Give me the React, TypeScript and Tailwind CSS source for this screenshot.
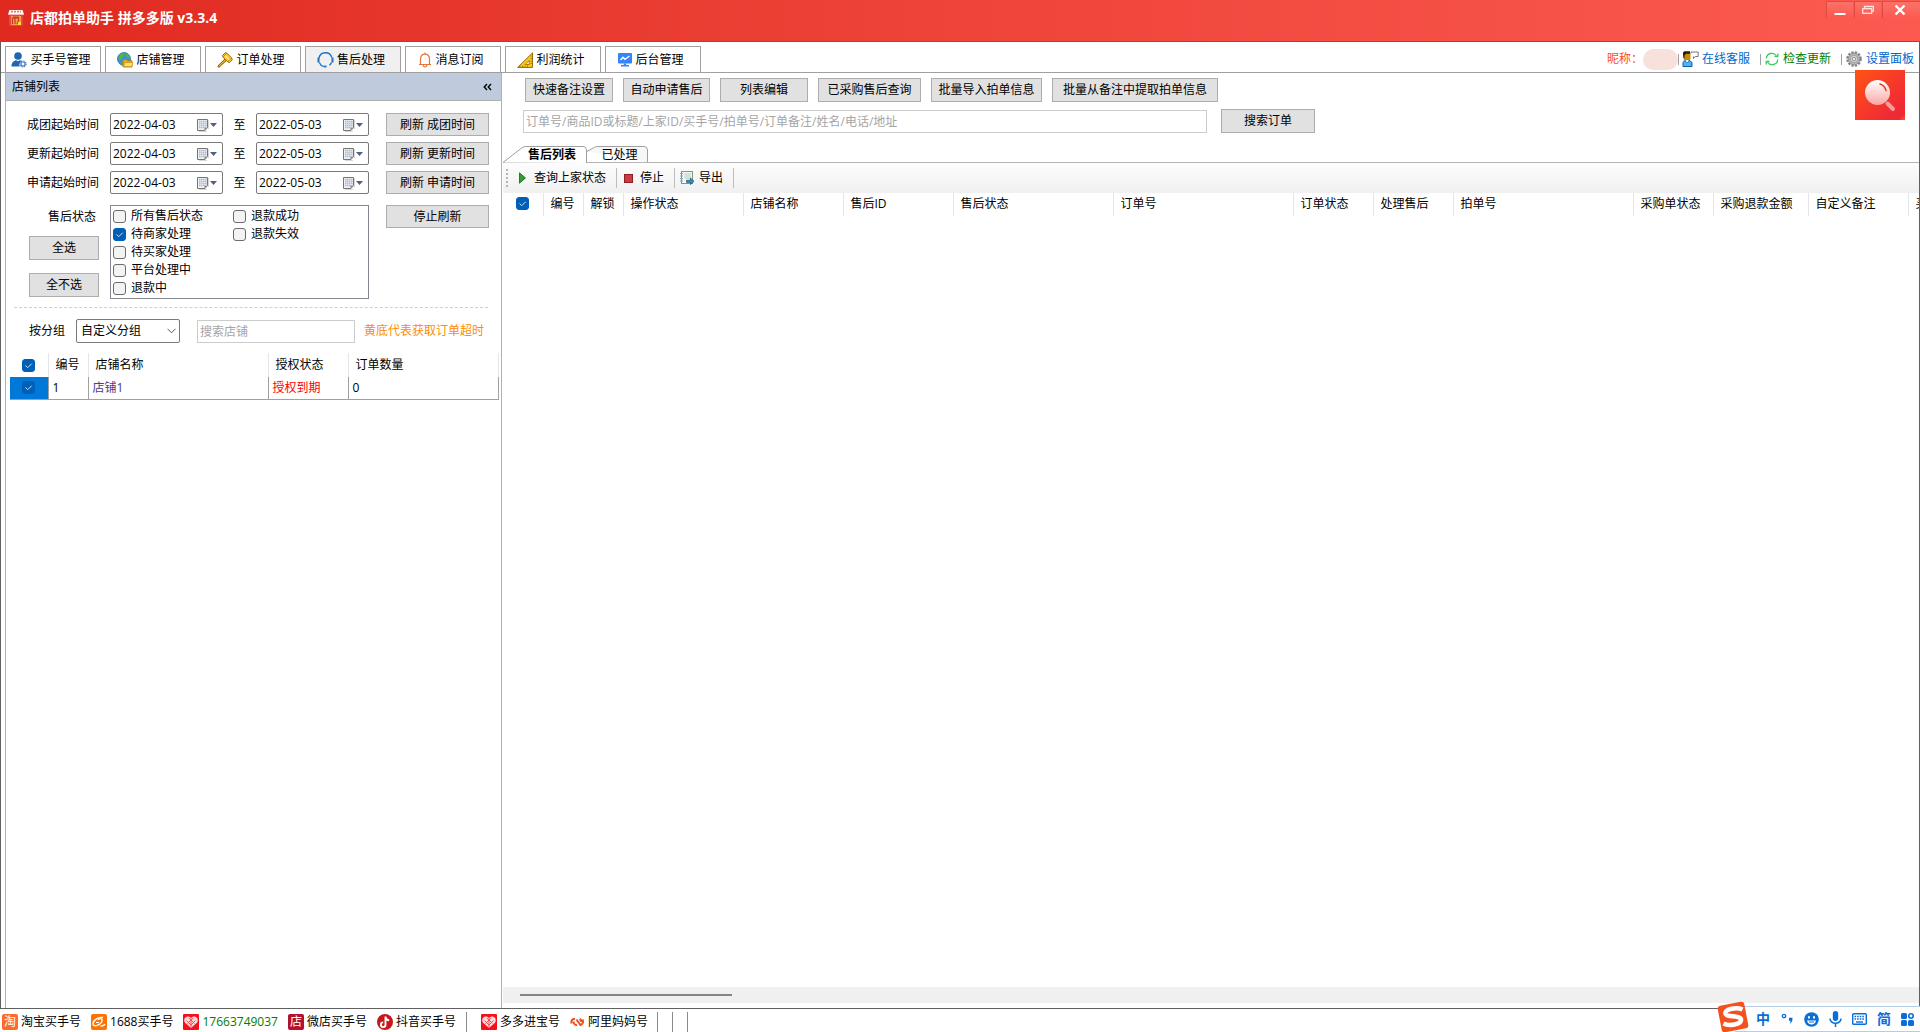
import { useState } from "react";
import type { ReactNode } from "react";
import clsx from "clsx";

const FONT = "font-['Open_Sans','Noto_Sans_CJK_SC',sans-serif]";

/* ---------- icons ---------- */

function ShopLogo() {
  return (
    <svg width="16" height="16" viewBox="0 0 16 16">
      <rect x="1" y="3" width="14" height="13" rx="1" fill="#e8453c" />
      <path d="M1.5 0h13L16 4.5H0z" fill="#fff" />
      <path d="M3 1.6h10" stroke="#e8766f" strokeWidth="1.6" strokeDasharray="2 1" />
      <path d="M0 4.5h16" stroke="#f3b6b2" />
      <rect x="3" y="6" width="10" height="9" fill="#f9a03f" />
      <path d="M4.5 14V8h2.5v6M7 8h3.5v3l-1.5 3M5 7h6" fill="none" stroke="#c8362c" strokeWidth="1.2" />
      <path d="M10 12h3v3h-3z" fill="#ffd94a" />
    </svg>
  );
}

function BuyerIcon() {
  return (
    <svg width="16" height="16" viewBox="0 0 16 16">
      <circle cx="7" cy="4" r="3.8" fill="#1f66b1" />
      <path d="M.5 14.500C.5 10.500 2.500 8.800 5 8.200l2 1 2-1c1 .2 2 .6 2.600 1.300-2.600.2-4 2.800-2.800 5z" fill="#1f66b1" />
      <circle cx="12" cy="12" r="3" fill="#fff" stroke="#4a86c4" strokeWidth="1.200" strokeDasharray="1.500 .85" />
      <circle cx="12" cy="12" r="2" fill="#fff" stroke="#4a86c4" strokeWidth="1.200" />
    </svg>
  );
}

function GlobeIcon() {
  return (
    <svg width="16" height="16" viewBox="0 0 16 16">
      <circle cx="7" cy="7" r="6.500" fill="#3f8fdc" stroke="#2a6fae" strokeWidth=".8" />
      <path d="M2 4c1-2 3-3 5-3l1 2-2 1-1 3-2 1-1.500-1zM9 1.500c2 .5 3.500 2 4 4L11 6 9 4zM4 9l3 1v3l-2-.5z" fill="#4fbb3b" />
      <path d="M6 7.500h3.500l1 1.200H15V15H6z" fill="#e9a91c" stroke="#b27a0a" strokeWidth=".8" />
      <path d="M6.500 14.500 8 10.500h8l-1.200 4z" fill="#ffe16a" stroke="#c78f12" strokeWidth=".7" />
    </svg>
  );
}

function GavelIcon() {
  return (
    <svg width="16" height="16" viewBox="0 0 16 16">
      <path d="M8.500 6.500.8 14l1 1.400L10 8" fill="#f0b41c" stroke="#7a4a06" strokeWidth=".9" />
      <path d="M5.500 3.500 8.500.6l1.500.6 4.500 4.600.8 2-2.800 2.800-2-.8-4.400-4.500z" fill="#ffc926" stroke="#8a5708" strokeWidth=".9" />
      <path d="m7.500 3 5.400 5.400" stroke="#fff0a0" strokeWidth="1.200" />
      <path d="m9.500 1.600-3 3M13.800 6.600l-3 3" stroke="#a06c0c" strokeWidth=".8" />
    </svg>
  );
}

function HeadsetIcon() {
  return (
    <svg width="17" height="16" viewBox="0 0 17 16" fill="none" stroke="#1d6fc4">
      <path d="M2 6A6.600 6.600 0 0 1 14.800 5.500" strokeWidth="1.300" />
      <path d="M1.500 5.500v5M15.500 5.500v5" strokeWidth="2" />
      <path d="M2.300 10.500c.8 2 2.200 3.400 4.200 4M14.500 10.500c-.5 1.300-1.100 2-2 2.700" strokeWidth="1.300" />
      <path d="M6.500 14.500h3" strokeWidth="1.800" />
    </svg>
  );
}

function BellIcon() {
  return (
    <svg width="14" height="16" viewBox="0 0 14 16" fill="none" stroke="#e8743a" strokeWidth="1.200">
      <path d="M7 .5v1.500M1 12.500h12M2.500 12.500V7.500C2.500 4.500 4.200 2.200 7 2.200s4.500 2.300 4.500 5.300v5M5.200 13c.2 1.500.8 2 1.800 2s1.600-.5 1.800-2" />
    </svg>
  );
}

function RulerIcon() {
  return (
    <svg width="16" height="16" viewBox="0 0 16 16">
      <path d="M15.500.8v14.700H.6z" fill="#f8c51c" stroke="#8a6408" strokeWidth=".9" />
      <path d="M12.200 8.500v4H8.300z" fill="#fff" stroke="#9a720c" strokeWidth=".9" />
      <path d="M3 15v-1.500M5.500 15v-1.500M8 15v-1.500M10.500 15v-1.500M15 4h-1.500M15 6.500h-1.500M15 9h-1.500M15 11.500h-1.500" stroke="#8a6408" strokeWidth=".7" />
    </svg>
  );
}

function MonitorIcon() {
  return (
    <svg width="14" height="14" viewBox="0 0 14 14">
      <rect width="14" height="10.500" rx="1" fill="#3385ff" />
      <path d="M2.500 7 5 4.300l2 2L11.500 3" fill="none" stroke="#fff" strokeWidth="1.400" />
      <path d="M5.800 10.500h2.400V12H11v1.600H3V12h2.800z" fill="#3385ff" />
    </svg>
  );
}

function AgentIcon() {
  return (
    <svg width="17" height="16" viewBox="0 0 17 16">
      <path d="M9 2.500V1h7.200v4.500h-3L11.500 7.500V5.500" fill="#fff" stroke="#777" />
      <rect x="1.500" y="2" width="7" height="7" rx="1" fill="#c98a06" />
      <path d="M1 3.500V1.500L2.500.3h5.500v2.500H4L2.500 4.500V7H1.500z" fill="#2a1c02" />
      <path d="M1 15.500v-4L3 9.200l2 1.500 2-1.500 3 2.300v4z" fill="#4fb4f5" stroke="#0b5ea8" />
      <path d="M3 9.500 5.200 12l2.200-2.500" fill="#fff" stroke="#0b5ea8" strokeWidth=".7" />
    </svg>
  );
}

function RefreshIcon() {
  return (
    <svg width="14" height="14" viewBox="0 0 14 14" fill="none" stroke="#34d058" strokeWidth="1.300">
      <path d="M1.300 6.500A5.500 5.500 0 0 1 11.500 4M12.700 7.500A5.500 5.500 0 0 1 2.500 10" />
      <path d="M12.800 1.500v3.200H9.500M1.200 12.500V9.300h3.300" />
    </svg>
  );
}

function GearIcon() {
  return (
    <svg width="16" height="16" viewBox="0 0 16 16">
      <circle cx="8" cy="8" r="6.300" fill="none" stroke="#858585" strokeWidth="3" strokeDasharray="2.200 1.100" />
      <circle cx="8" cy="8" r="5.800" fill="#b4b4b4" stroke="#8b8b8b" strokeWidth=".8" />
      <circle cx="8" cy="8" r="3.600" fill="#d8d8d8" stroke="#9a9a9a" strokeWidth=".8" />
      <circle cx="8" cy="8" r="1.600" fill="#fff" stroke="#777" strokeWidth=".8" />
    </svg>
  );
}

function CalendarIcon() {
  return (
    <svg width="20" height="14" viewBox="0 0 20 14">
      <path d="M2 13.500h8M11.500 2v9" stroke="#d9d5d3" />
      <path d="M.5 1.500h10v8l-2.500 3H.5z" fill="#eef1f6" stroke="#7b7272" />
      <path d="M2 3.500h7.500M2 5.500h7.500M2 7.500h7.500M2 9.500h6" stroke="#b3bccb" strokeWidth="1.500" strokeDasharray="1.500 .5" />
      <path d="M7.500 12.500v-3h3z" fill="#8d8585" />
      <path d="M13 5h7l-3.500 4z" fill="#4d6185" />
    </svg>
  );
}

function ExportIcon() {
  return (
    <svg width="14" height="14" viewBox="0 0 14 14">
      <rect x="1.500" y=".5" width="11" height="12" fill="#f4f8f2" stroke="#7d9a78" />
      <path d="M0 2.500h3M0 5h3M0 7.500h3M0 10h3" stroke="#8aa3b5" />
      <path d="M4.500 3h6.500M4.500 5h6.500M4.500 7h6.500" stroke="#b9cbb4" />
      <path d="M6.500 9.200h4V7L14 10.300 10.500 13.600v-2.200h-4z" fill="#2f8fc4" stroke="#14587f" strokeWidth=".7" />
    </svg>
  );
}

function AliIcon() {
  return (
    <svg width="16" height="16" viewBox="0 0 16 16">
      <rect width="16" height="16" rx="2" fill="#ff7300" />
      <path d="M12 3.500C7.500 2.800 2.500 6 2 9.500c-.2 2.500 2.500 2.800 5 1.500 2.500-1.200 4.500-3.200 4-5.500-.3-1.200-2.500-1.200-4 .3M9.500 12c2 .3 3.500-.4 4.500-1.700" fill="none" stroke="#fff" strokeWidth="1.400" />
      <path d="M5 8.500h3" stroke="#fff" />
    </svg>
  );
}

function PddIcon() {
  return (
    <svg width="16" height="16" viewBox="0 0 16 16">
      <rect width="16" height="16" rx="1" fill="#f5101b" />
      <path d="M8 14 1.800 8.500C.6 6.500 1.300 2.800 4.500 2.600 6.200 2.500 7.300 3.100 8 4.100c.7-1 1.800-1.600 3.500-1.500 3.200.2 3.900 3.900 2.700 5.900z" fill="#ffd9d9" />
      <path d="M3.500 6.500 8 11M6 4l5.500 5.500M12.500 6.500 8 11M10 4 4.500 9.500M8 4.500v9" stroke="#f5444c" strokeWidth=".9" />
    </svg>
  );
}

function DouyinIcon() {
  return (
    <svg width="16" height="16" viewBox="0 0 16 16">
      <circle cx="8" cy="8" r="8" fill="#c8161d" />
      <path d="M8.500 2.500v8.200a2.300 2.300 0 1 1-2.300-2.300M8.500 3c.3 2 1.600 3.200 3.700 3.400" fill="none" stroke="#fff" strokeWidth="1.900" />
    </svg>
  );
}

function AlimamaIcon() {
  return (
    <svg width="16" height="16" viewBox="0 0 16 16" fill="none" stroke="#f04e1e" strokeWidth="2">
      <path d="M2.500 9.500C1.800 6.500 3.500 4.500 6 5M4.500 7.500c0 2 1.500 3.800 3.500 3.500M7.500 5.500l4 5.500c2.500-.8 3.200-3.500 2-5.500M10.500 5c1.500.8 1.800 2 1.500 3" />
    </svg>
  );
}

function LetterIcon({ bg, children }: { bg: string; children: ReactNode }) {
  return (
    <span className={clsx("flex size-4 items-center justify-center rounded-xs text-[12px] leading-4 text-white", bg)}>
      {children}
    </span>
  );
}

/* ---------- basic controls ---------- */

function WinButton({ className, children }: { className?: string; children: ReactNode }) {
  return (
    <button
      type="button"
      className={clsx(
        "flex shrink-0 items-center justify-center border border-[#adadad] bg-[#e1e1e1] whitespace-nowrap hover:bg-[#e5f1fb]",
        className
      )}
    >
      {children}
    </button>
  );
}

interface CheckProps {
  checked: boolean;
  onChange: () => void;
  label: string;
  hideLabel?: boolean;
}

function Check({ checked, onChange, label, hideLabel }: CheckProps) {
  return (
    <label className="flex h-[18px] items-center gap-[5px]">
      <span className="grid size-[13px] shrink-0">
        <input
          type="checkbox"
          aria-label={label}
          checked={checked}
          onChange={onChange}
          className="col-start-1 row-start-1 size-[13px] appearance-none rounded-[3px] border border-[#6b6b6b] bg-[#f3f3f3] checked:border-[#005fb8] checked:bg-[#005fb8]"
        />
        {checked && (
          <svg viewBox="0 0 13 13" className="pointer-events-none col-start-1 row-start-1 size-[13px]" fill="none" stroke="#cfe3f5">
            <path d="m3.500 6.500 2.200 2.200 4-4" />
          </svg>
        )}
      </span>
      {!hideLabel && <span className="whitespace-nowrap">{label}</span>}
    </label>
  );
}

function DateBox({ label, value }: { label: string; value: string }) {
  return (
    <div className="flex h-[23px] w-[113px] items-center rounded-[2px] border border-[#7a7a7a] bg-white pr-[5px] pl-[2px]">
      <input aria-label={label} defaultValue={value} className="w-full min-w-0 outline-none" />
      <button type="button" aria-label={`选择${label}`} className="shrink-0">
        <CalendarIcon />
      </button>
    </div>
  );
}

/* ---------- window chrome ---------- */

function TitleBar() {
  return (
    <header className="flex h-[42px] shrink-0 justify-between border-b border-[#6b5a5a] bg-linear-to-r from-[#e0291f] to-[#fc5a50] pl-2">
      <div className="flex h-[36px] items-center gap-[6px]">
        <ShopLogo />
        <h1 className="text-[14px] font-bold text-white">店都拍单助手 拼多多版 v3.3.4</h1>
      </div>
      <div className="flex h-[18px] gap-px pt-px">
        <button type="button" aria-label="最小化" className="flex w-[27px] items-center justify-center border-t border-l border-[#e04a42] bg-linear-to-b from-white/15 to-transparent">
          <svg width="12" height="12" viewBox="0 0 12 12"><path d="M.5 10h11" stroke="#fff" strokeWidth="2" /></svg>
        </button>
        <button type="button" aria-label="还原" className="flex w-[27px] items-center justify-center border-t border-l border-[#e04a42] bg-linear-to-b from-white/15 to-transparent">
          <svg width="12" height="10" viewBox="0 0 12 10" fill="none" stroke="#ffe4e2">
            <path d="M2.500 3V1.500h9V6H10" strokeWidth="1.300" />
            <rect x=".7" y="3.700" width="9" height="4.600" strokeWidth="1.300" />
          </svg>
        </button>
        <button type="button" aria-label="关闭" className="flex w-[38px] items-center justify-center border-t border-l border-[#e04a42] bg-linear-to-b from-white/15 to-transparent pr-[3px]">
          <svg width="12" height="12" viewBox="0 0 12 12"><path d="m1.500 1.500 9 9m0-9-9 9" stroke="#fff" strokeWidth="2.400" /></svg>
        </button>
      </div>
    </header>
  );
}

const NAV_TABS = [
  { name: "买手号管理", icon: <BuyerIcon /> },
  { name: "店铺管理", icon: <GlobeIcon /> },
  { name: "订单处理", icon: <GavelIcon /> },
  { name: "售后处理", icon: <HeadsetIcon /> },
  { name: "消息订阅", icon: <BellIcon /> },
  { name: "利润统计", icon: <RulerIcon /> },
  { name: "后台管理", icon: <MonitorIcon /> },
];

function NavBar() {
  const [active, setActive] = useState("售后处理");

  return (
    <div className="flex h-[31px] shrink-0 items-end justify-between border-b border-[#a0a0a0] pl-1">
      <nav className="flex gap-1">
        {NAV_TABS.map((tab) => (
          <button
            key={tab.name}
            type="button"
            onClick={() => setActive(tab.name)}
            className={clsx(
              "flex h-[26px] w-24 items-center justify-center gap-[3px] border border-b-0 border-[#a0a0a0] pr-1",
              active === tab.name ? "bg-[#f0f0f0]" : "bg-white"
            )}
          >
            {tab.icon}
            {tab.name}
          </button>
        ))}
      </nav>
      <div className="flex h-[26px] items-center pr-[5px]">
        <span className="text-[#ff4e16]">昵称：</span>
        <span className="h-[21px] w-[35px] rounded-full bg-[#f7e1da]" />
        <a href="#service" className="flex items-center gap-[3px] text-[#0066cc]">
          <i className="h-[11px] w-px bg-[#a0a0a0]" />
          <AgentIcon />
          在线客服
        </a>
        <a href="#update" className="ml-[10px] flex items-center gap-1 text-[#008000]">
          <i className="h-[11px] w-px bg-[#a0a0a0]" />
          <RefreshIcon />
          检查更新
        </a>
        <a href="#settings" className="ml-[10px] flex items-center gap-1 text-[#0066cc]">
          <i className="h-[11px] w-px bg-[#a0a0a0]" />
          <GearIcon />
          设置面板
        </a>
      </div>
    </div>
  );
}

/* ---------- left: shop list ---------- */

const DATE_ROWS = ["成团", "更新", "申请"];
const STATUS_LIST = ["所有售后状态", "待商家处理", "待买家处理", "平台处理中", "退款中", "退款成功", "退款失效"];

function Filters() {
  const [picked, setPicked] = useState<string[]>(["待商家处理"]);

  const toggle = (name: string) => {
    setPicked(picked.includes(name) ? picked.filter((p) => p !== name) : [...picked, name]);
  };

  return (
    <div className="pt-3 pr-3 pl-[21px]">
      <div className="flex flex-col gap-[6px]">
        {DATE_ROWS.map((row) => (
          <div key={row} className="flex h-[23px] items-center">
            <span className="w-[83px]">{row}起始时间</span>
            <DateBox label={`${row}起始时间`} value="2022-04-03" />
            <span className="w-[33px] text-center">至</span>
            <DateBox label={`${row}结束时间`} value="2022-05-03" />
            <WinButton className="ml-auto h-[23px] w-[103px]">刷新 {row}时间</WinButton>
          </div>
        ))}
      </div>
      <div className="mt-[11px] flex">
        <div className="flex w-[83px] flex-col pl-[2px]">
          <span className="h-[31px] pl-[19px] leading-6">售后状态</span>
          <WinButton className="h-6 w-[70px]">全选</WinButton>
          <WinButton className="mt-[13px] h-6 w-[70px]">全不选</WinButton>
        </div>
        <div className="grid h-[94px] w-[259px] grid-flow-col grid-cols-[120px_1fr] grid-rows-[repeat(5,18px)] content-start border border-[#828790] pt-px pl-[2px]">
          {STATUS_LIST.map((name) => (
            <Check key={name} label={name} checked={picked.includes(name)} onChange={() => toggle(name)} />
          ))}
        </div>
        <WinButton className="ml-auto h-[23px] w-[103px]">停止刷新</WinButton>
      </div>
    </div>
  );
}

function ShopTable() {
  const [checked, setChecked] = useState(true);

  return (
    <table className="mx-1 mt-[10px] w-[489px] table-fixed border-collapse text-left">
      <colgroup>
        <col className="w-[38px]" />
        <col className="w-[40px]" />
        <col className="w-[180px]" />
        <col className="w-[80px]" />
        <col />
      </colgroup>
      <thead>
        <tr className="h-6 [&>th]:border-r [&>th]:border-[#e5e5e5] [&>th]:py-0 [&>th]:pl-[7px] [&>th]:font-normal">
          <th>
            <div className="flex pl-[5px]">
              <Check label="全选店铺" hideLabel checked={checked} onChange={() => setChecked(!checked)} />
            </div>
          </th>
          <th>编号</th>
          <th>店铺名称</th>
          <th>授权状态</th>
          <th>订单数量</th>
        </tr>
      </thead>
      <tbody>
        <tr className="h-[22px] [&>td]:border-r [&>td]:border-b [&>td]:border-[#a0a0a0] [&>td]:py-0 [&>td]:pl-[4px]">
          <td className="bg-[#0078d7]">
            <div className="flex pl-[8px]">
              <Check label="店铺1" hideLabel checked={checked} onChange={() => setChecked(!checked)} />
            </div>
          </td>
          <td>1</td>
          <td className="text-[#483d8b]">店铺1</td>
          <td className="text-[#ff0000]">授权到期</td>
          <td>0</td>
        </tr>
      </tbody>
    </table>
  );
}

function ShopPanel() {
  return (
    <aside className="ml-1 flex w-[497px] shrink-0 flex-col border-x border-[#b0b0b0]">
      <div className="flex h-7 shrink-0 items-center justify-between border-b border-[#b0b0b0] bg-[#bfcbdc] pr-[9px] pl-[6px]">
        <h2>店铺列表</h2>
        <button type="button" aria-label="收起">
          <svg width="9" height="8" viewBox="0 0 9 8" fill="none" stroke="#000" strokeWidth="1.400">
            <path d="M4 1 1.200 4 4 7M8 1 5.200 4 8 7" />
          </svg>
        </button>
      </div>
      <Filters />
      <div className="mt-2 mr-[13px] ml-2 border-t border-dashed border-[#cfcfcf]" />
      <div className="mt-[11px] flex h-6 items-center pl-[23px]">
        <label htmlFor="group" className="w-[47px]">按分组</label>
        <div className="grid w-[104px]">
          <select id="group" className="col-start-1 row-start-1 h-6 appearance-none rounded-[2px] border border-[#7a7a7a] bg-white pl-1">
            <option>自定义分组</option>
          </select>
          <svg width="9" height="6" viewBox="0 0 9 6" className="pointer-events-none col-start-1 row-start-1 mr-1 self-center justify-self-end" fill="none" stroke="#555">
            <path d="m.5.8 4 4 4-4" />
          </svg>
        </div>
        <input aria-label="搜索店铺" placeholder="搜索店铺" className="ml-[17px] h-[23px] w-[158px] border border-[#cccccc] px-[2px] placeholder:text-[#a5a5a5]" />
        <span className="ml-[9px] text-[#ff8c00]">黄底代表获取订单超时</span>
      </div>
      <ShopTable />
    </aside>
  );
}

/* ---------- right: after-sale list ---------- */

const COLUMNS = [
  { name: "编号", width: "w-[40px]" },
  { name: "解锁", width: "w-[40px]" },
  { name: "操作状态", width: "w-[120px]" },
  { name: "店铺名称", width: "w-[100px]" },
  { name: "售后ID", width: "w-[110px]" },
  { name: "售后状态", width: "w-[160px]" },
  { name: "订单号", width: "w-[180px]" },
  { name: "订单状态", width: "w-[80px]" },
  { name: "处理售后", width: "w-[80px]" },
  { name: "拍单号", width: "w-[180px]" },
  { name: "采购单状态", width: "w-[80px]" },
  { name: "采购退款金额", width: "w-[95px]" },
  { name: "自定义备注", width: "w-[100px]" },
  { name: "买家备注", width: "w-[100px]" },
];

function OrderTable() {
  const [all, setAll] = useState(true);

  return (
    <div className="min-h-0 flex-1 overflow-hidden">
      <table className="w-[1505px] table-fixed border-collapse text-left">
        <colgroup>
          <col className="w-[40px]" />
          {COLUMNS.map((col) => (
            <col key={col.name} className={col.width} />
          ))}
        </colgroup>
        <thead>
          <tr className="h-[23px] [&>th]:border-r [&>th]:border-[#e5e5e5] [&>th]:pt-0 [&>th]:pb-[2px] [&>th]:pl-[7px] [&>th]:font-normal [&>th]:whitespace-nowrap">
            <th>
              <div className="flex pl-[6px]">
                <Check label="全选订单" hideLabel checked={all} onChange={() => setAll(!all)} />
              </div>
            </th>
            {COLUMNS.map((col) => (
              <th key={col.name}>{col.name}</th>
            ))}
          </tr>
        </thead>
      </table>
    </div>
  );
}

function ListTabs() {
  return (
    <div className="flex h-[17px] shrink-0 border-b border-[#b5b5b5]">
      <button type="button" className="relative h-[17px] w-[84px] pl-[14px] leading-[17px] font-bold">
        <svg viewBox="0 0 84 17" className="absolute inset-0 h-[17px] w-[84px]" stroke="#a0a0a0" fill="#fff">
          <path d="M0 16.500 18 2.500q2-2 5-2H80q3.500 0 3.500 3.500V17" />
        </svg>
        <span className="relative">售后列表</span>
      </button>
      <button type="button" className="relative h-4 w-[61px] pl-[4px] leading-[17px]">
        <svg viewBox="0 0 61 16" className="absolute inset-0 h-4 w-[61px]" stroke="#a0a0a0" fill="#f7f7f7">
          <path d="M0 5.500 7 1.500q1.500-1 4-1H57q3.500 0 3.500 3.500V16" />
        </svg>
        <span className="relative">已处理</span>
      </button>
    </div>
  );
}

function Toolbar() {
  return (
    <div className="flex h-[30px] shrink-0 items-center bg-linear-to-b from-[#fdfdfd] to-[#f0f0f0] pl-[3px]">
      <span className="h-[18px] border-l-2 border-dotted border-[#b5b5b5]" />
      <button type="button" className="flex items-center gap-2 pr-[10px] pl-[11px]">
        <svg width="7" height="12" viewBox="0 0 7 12"><path d="M.5.8 6.500 6 .5 11.200z" fill="#2f9e2f" stroke="#176117" strokeWidth=".8" /></svg>
        查询上家状态
      </button>
      <span className="h-5 w-px bg-[#bdbdbd]" />
      <button type="button" className="flex items-center gap-[7px] pr-[10px] pl-[7px]">
        <i className="size-[9px] border border-[#8f1d24] bg-[#cc3a42]" />
        停止
      </button>
      <span className="h-5 w-px bg-[#bdbdbd]" />
      <button type="button" className="flex items-center gap-[5px] pr-[10px] pl-[5px]">
        <ExportIcon />
        导出
      </button>
      <span className="h-5 w-px bg-[#bdbdbd]" />
    </div>
  );
}

function OrderPanel() {
  return (
    <main className="flex min-w-0 flex-1 flex-col pl-px">
      <div className="flex gap-[10px] pt-[5px] pl-[22px]">
        <WinButton className="h-6 w-[88px]">快速备注设置</WinButton>
        <WinButton className="h-6 w-[87px]">自动申请售后</WinButton>
        <WinButton className="h-6 w-[88px]">列表编辑</WinButton>
        <WinButton className="h-6 w-[103px]">已采购售后查询</WinButton>
        <WinButton className="h-6 w-[111px]">批量导入拍单信息</WinButton>
        <WinButton className="h-6 w-[166px]">批量从备注中提取拍单信息</WinButton>
      </div>
      <div className="mt-[7px] flex items-center gap-[14px] pl-5">
        <input
          aria-label="搜索订单"
          placeholder="订单号/商品ID或标题/上家ID/买手号/拍单号/订单备注/姓名/电话/地址"
          className="h-[23px] w-[684px] border border-[#cccccc] px-[2px] placeholder:text-[#a5a5a5]"
        />
        <WinButton className="h-6 w-[94px]">搜索订单</WinButton>
      </div>
      <div className="h-[13px] shrink-0" />
      <ListTabs />
      <Toolbar />
      <OrderTable />
      <div className="mb-[5px] flex h-4 shrink-0 items-center bg-[#f0f0f0] pl-[17px]">
        <div className="h-[2px] w-[212px] bg-[#858585]" />
      </div>
    </main>
  );
}

/* ---------- bottom ---------- */

function StatusItem({ icon, className, children }: { icon: ReactNode; className?: string; children: ReactNode }) {
  return (
    <a href="#account" className={clsx("flex items-center gap-[3px]", className)}>
      {icon}
      {children}
    </a>
  );
}

function StatusBar() {
  return (
    <footer className="flex h-[23px] shrink-0 items-center pt-[3px] pl-[2px]">
      <div className="flex items-center gap-[10px]">
        <StatusItem icon={<LetterIcon bg="bg-[#ff6a2b]">淘</LetterIcon>}>淘宝买手号</StatusItem>
        <StatusItem icon={<AliIcon />}>1688买手号</StatusItem>
        <StatusItem icon={<PddIcon />} className="text-[#008000]">17663749037</StatusItem>
        <StatusItem icon={<LetterIcon bg="bg-[#b3122e]">店</LetterIcon>}>微店买手号</StatusItem>
        <StatusItem icon={<DouyinIcon />}>抖音买手号</StatusItem>
        <span className="h-5 w-px bg-[#8a8a8a]" />
      </div>
      <div className="ml-[14px] flex items-center gap-[9px]">
        <StatusItem icon={<PddIcon />}>多多进宝号</StatusItem>
        <StatusItem icon={<AlimamaIcon />}>阿里妈妈号</StatusItem>
      </div>
      <div className="ml-[9px] flex gap-[14px]">
        <span className="h-5 w-px bg-[#8a8a8a]" />
        <span className="h-5 w-px bg-[#8a8a8a]" />
        <span className="h-5 w-px bg-[#8a8a8a]" />
      </div>
    </footer>
  );
}

/* input method bar floating over the window corner */
function ImeBar() {
  return (
    <div className="absolute right-0 bottom-0 flex h-[26px] items-center border-y border-[#b5cdea] bg-white pr-[6px] text-[#0a6ed8]">
      <div className="-mt-1 -ml-[18px] flex h-[31px] items-center">
        <svg width="32" height="32" viewBox="0 0 32 32">
          <rect x="2.500" y="2.500" width="27" height="27" rx="3" fill="#f4511e" transform="rotate(-11 16 16)" />
          <path d="M25.500 8.500C20 6 8 7.500 8.500 12.500c.5 4 15 1.500 15.500 6C24.500 23.500 12 25.500 6.500 22.500" fill="none" stroke="#fff" strokeWidth="4.600" />
        </svg>
      </div>
      <div className="flex items-center gap-[10px] pl-[7px]">
        <button type="button" className="w-[14px] text-[14px] font-bold">中</button>
        <svg width="14" height="14" viewBox="0 0 14 14">
          <circle cx="4" cy="4" r="1.700" fill="none" stroke="#0a6ed8" strokeWidth="1.300" />
          <path d="M9 5.800h3.400c.5 3-.7 5-2.700 5.900.8-1.200.9-2 .8-2.900H9z" fill="#0a6ed8" />
        </svg>
        <svg width="15" height="15" viewBox="0 0 15 15">
          <circle cx="7.500" cy="7.500" r="7.300" fill="#0a6ed8" />
          <path d="M4 4.200h2v2.300H4zM9 4.200h2v2.300H9zM3 8.500h9c-.5 2.600-2.300 4-4.500 4s-4-1.400-4.500-4z" fill="#fff" />
          <path d="M5 10h5" stroke="#0a6ed8" />
        </svg>
        <svg width="13" height="16" viewBox="0 0 13 16">
          <rect x="3.800" y="0" width="5.400" height="10" rx="2.700" fill="#0a6ed8" />
          <path d="M1 7.500a5.500 4.800 0 0 0 11 0M6.500 12.500V16" fill="none" stroke="#0a6ed8" strokeWidth="1.500" />
        </svg>
        <svg width="15" height="12" viewBox="0 0 15 12" fill="none" stroke="#0a6ed8">
          <rect x=".7" y=".7" width="13.600" height="10.600" rx="1" strokeWidth="1.400" />
          <path d="M2.500 3.500h10M2.500 6h10" strokeWidth="1.600" strokeDasharray="1.600 1" />
          <path d="M4 9h7" strokeWidth="1.400" />
        </svg>
        <button type="button" className="w-[14px] text-[14px] font-bold">简</button>
        <svg width="13" height="13" viewBox="0 0 13 13" fill="#0a6ed8">
          <rect width="6" height="6" rx="1.500" />
          <rect y="7" width="6" height="6" rx="1.500" />
          <rect x="7" y="7" width="6" height="6" rx="1.500" />
          <circle cx="10" cy="3" r="2.200" fill="none" stroke="#0a6ed8" strokeWidth="1.600" />
        </svg>
      </div>
    </div>
  );
}

/* red magnifier pinned over the top right corner of the page */
function FloatingSearch() {
  return (
    <button type="button" aria-label="找货" className="absolute top-[70px] right-[15px] size-[50px]">
      <svg viewBox="0 0 50 50">
        <defs>
          <linearGradient id="fs-bg" x1="0" y1="0" x2="1" y2="1">
            <stop offset="0" stopColor="#ff5414" />
            <stop offset=".8" stopColor="#f02a35" />
            <stop offset=".93" stopColor="#f02a35" />
            <stop offset="1" stopColor="#ff5a1e" />
          </linearGradient>
          <linearGradient id="fs-lens" x1="0" y1="0" x2="0" y2="1">
            <stop offset="0" stopColor="#fff" />
            <stop offset="1" stopColor="#fba7a3" />
          </linearGradient>
        </defs>
        <rect width="50" height="50" fill="url(#fs-bg)" />
        <path d="m32.500 33.500 5.500 5.500" stroke="#f99b9b" strokeWidth="4" strokeLinecap="round" />
        <circle cx="22.500" cy="22.500" r="12.500" fill="url(#fs-lens)" />
        <path d="M25 14c3 .8 5 3 6 6.500" fill="none" stroke="#f03a30" strokeWidth="1.600" strokeLinecap="round" />
      </svg>
    </button>
  );
}

export default function App() {
  return (
    <div className={clsx("relative flex h-screen flex-col overflow-hidden bg-white text-[12px] leading-4 text-black", FONT)}>
      <TitleBar />
      <div className="flex min-h-0 flex-1 flex-col border-x border-b border-[#606060]">
        <NavBar />
        <div className="flex min-h-0 flex-1">
          <ShopPanel />
          <OrderPanel />
        </div>
      </div>
      <StatusBar />
      <FloatingSearch />
      <ImeBar />
    </div>
  );
}
